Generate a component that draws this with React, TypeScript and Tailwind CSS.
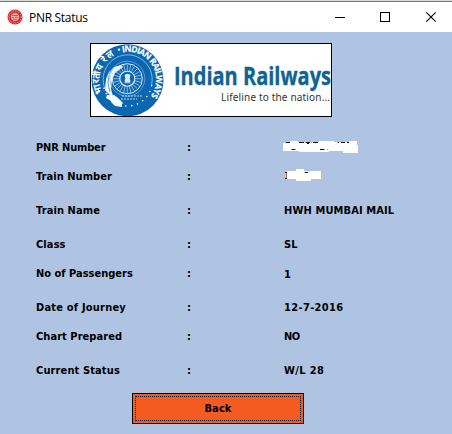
import React from "react";

type Row = { label: string; labelCls: string; value?: string; valueCls?: string; height: string; redacted?: "pnr" | "train" };

const rows: Row[] = [
  { label: "PNR Number", labelCls: "tracking-[-0.15px]", height: "h-[29px]", redacted: "pnr" },
  { label: "Train Number", labelCls: "tracking-[0.05px]", height: "h-[34px]", redacted: "train" },
  { label: "Train Name", labelCls: "tracking-[0.1px]", value: "HWH MUMBAI MAIL", valueCls: "tracking-[0.12px]", height: "h-[34px]" },
  { label: "Class", labelCls: "tracking-[0.1px]", value: "SL", height: "h-[29px]" },
  { label: "No of Passengers", labelCls: "tracking-[0px]", value: "1", valueCls: "pt-px", height: "h-[34px]" },
  { label: "Date of Journey", labelCls: "tracking-[0.2px]", value: "12-7-2016", valueCls: "tracking-[0.35px]", height: "h-[29px]" },
  { label: "Chart Prepared", labelCls: "tracking-[0.05px]", value: "NO", valueCls: "tracking-[-0.5px]", height: "h-[34px]" },
  { label: "Current Status", labelCls: "tracking-[0.12px]", value: "W/L 28", valueCls: "tracking-[0.35px]", height: "h-[23px]" },
];

function AppIcon() {
  return (
    <svg width="16" height="16" viewBox="0 0 16 16" className="mr-[6px] shrink-0">
      <circle cx="8" cy="8" r="7.5" fill="#e0242b" />
      <circle cx="8" cy="8" r="6" fill="none" stroke="#f6b3b3" strokeWidth="1" strokeDasharray="1 1.1" />
      <circle cx="8" cy="8" r="4.5" fill="#f2b4b4" stroke="#d51d26" strokeWidth=".8" />
      <path d="M5 6.5h6M5 8.5h2M8 8.2h3M6 10.3h4" stroke="#d8444a" strokeWidth=".9" />
    </svg>
  );
}

function Emblem() {
  const stars = Array.from({ length: 12 }, (_, i) => {
    const a = ((i * 14 + 10) * Math.PI) / 180;
    return { x: 36.5 + 24.5 * Math.cos(a), y: 36.5 + 24.5 * Math.sin(a) };
  });
  const spokes = Array.from({ length: 24 }, (_, i) => (i * 15 * Math.PI) / 180);
  return (
    <svg width="74" height="72" viewBox="0 0 74 72" className="shrink-0">
      <defs>
        <path id="ringRight" d="M31.5 8.4A28 28 0 0 1 58 54.5" />
        <path id="ringLeft" d="M11 48.5A28 28 0 0 1 26 10.3" />
      </defs>
      <circle cx="36.5" cy="36.2" r="36" fill="#0b67b2" />
      <path d="M17 50A24.5 24.5 0 1 1 60.5 41" fill="none" stroke="#8fbee2" strokeWidth=".9" />
      {stars.map((s, i) => (
        <circle key={i} cx={s.x} cy={s.y + 1} r=".8" fill="#fff" />
      ))}
      <path d="M15 35l3-7 5-5 7-2 2 2-8 6-3 7-1 9 2 7 5 5 4 3v3l-7-1-4-4-1-7-5-5z" fill="#f1f7fc" />
      <path d="M16 51h7l4 3 5 5-2 2-8-3-7-4z" fill="#fff" />
      <path d="M18 31l-1 8 2 9M21 25l-3 5" stroke="#3d8cc8" strokeWidth=".8" fill="none" />
      {spokes.map((a, i) => (
        <path
          key={i}
          d={`M${36.3 + 8 * Math.cos(a)} ${34.7 + 8 * Math.sin(a)}L${36.3 + 14 * Math.cos(a)} ${34.7 + 14 * Math.sin(a)}`}
          stroke="#a9cdea"
          strokeWidth=".8"
        />
      ))}
      <circle cx="36.3" cy="34.7" r="17.5" fill="none" stroke="#7db3dc" strokeWidth=".7" />
      <circle cx="36.3" cy="34.7" r="15" fill="none" stroke="#e7f1f9" strokeWidth="1" />
      <circle cx="36.3" cy="34.7" r="7.5" fill="#0b67b2" stroke="#e7f1f9" strokeWidth="1.1" />
      <path d="M34 31.2q2.5-2 5 0l-.8 3.2.8 3h-5l.8-3zM33.5 38.7h6" fill="#d7e8f5" stroke="#fff" strokeWidth=".8" />
      <path d="M31 52h20M30 55h16" stroke="#bad7ed" strokeWidth="1" strokeDasharray="2 1" fill="none" />
      <circle cx="28" cy="5.6" r="1.2" fill="#fff" />
      <g fill="#fff" fontFamily="'Open Sans', sans-serif" fontWeight="700">
        <text fontSize="8.6" stroke="#fff" strokeWidth=".15">
          <textPath href="#ringRight" textLength="67" startOffset="0">INDIAN RAILWAYS</textPath>
        </text>
        <text fontSize="9.5">
          <textPath href="#ringLeft" textLength="42" startOffset="0">भारतीय रेल</textPath>
        </text>
      </g>
    </svg>
  );
}

function Logo() {
  return (
    <div className="flex h-[74px] w-[242px] border border-black bg-white">
      <Emblem />
      <svg width="166" height="72" viewBox="0 0 166 72" className="shrink-0">
        <text x="9" y="41" fontFamily="'Open Sans', sans-serif" fontWeight="700" fontSize="24.5" fill="#116394" stroke="#116394" strokeWidth=".35" textLength="157" lengthAdjust="spacingAndGlyphs">Indian Railways</text>
        <text x="56" y="57" fontFamily="'Noto Sans', 'Open Sans', sans-serif" fontWeight="400" fontSize="10" fill="#333" textLength="109" lengthAdjust="spacing">Lifeline to the nation...</text>
      </svg>
    </div>
  );
}

function PnrMask() {
  return (
    <svg width="76" height="13" viewBox="0 0 76 13" shapeRendering="crispEdges" className="absolute -left-[1px] top-[5px]">
      <path d="M0 2h7V0h8v1h21V0h15v1h15V0h8v4h1v8H60v-2H46v1H16v-1H0z" fill="#fff" />
      <path d="M3 1.5h4M16 1.5h5M23 1.5h4M30 1.5h5M55 1.5h1M58 1.5h4M64 1.5h2M9 8.5h3M37 8.5h4M24 2.5h2" stroke="#111" />
      <path d="M22 1.5h1M28 1.5h1M54 1.5h1M12 8.5h1M41 8.5h1" stroke="#75b6ee" />
      <path d="M8 8.5h1M44 8.5h1" stroke="#c98838" />
    </svg>
  );
}

function TrainMask() {
  return (
    <svg width="40" height="13" viewBox="0 0 40 13" shapeRendering="crispEdges" className="absolute left-0 top-[4px]">
      <path d="M3 2h9V0h8v2h17v8H27v2H12v-2H3z" fill="#fff" />
      <path d="M1 3.5h2M1 9.5h2M21 3.5h3" stroke="#111" />
      <path d="M2.5 4v5" stroke="#a47b32" />
      <path d="M20 3.5h1" stroke="#75b6ee" />
    </svg>
  );
}

export default function App() {
  return (
    <div className="flex h-[434px] w-[452px] flex-col overflow-hidden bg-[#afc4e2] font-['DejaVu_Sans_Condensed','DejaVu_Sans',sans-serif] text-[11px] leading-[23px] font-bold text-black">
      <div className="h-px shrink-0 bg-[#dcdcd6]" />
      <header className="flex h-[31px] shrink-0 items-center border-t border-[#189ab4] bg-white pl-[7px]">
        <AppIcon />
        <span className="font-['Open_Sans',sans-serif] text-[12px] font-normal tracking-[-0.3px]">PNR Status</span>
        <svg width="138" height="29" viewBox="0 0 138 29" className="ml-auto" shapeRendering="crispEdges">
          <path d="M21 14.5h10" stroke="#000" />
          <path d="M66.5 9.5h9v9h-9z" fill="none" stroke="#000" />
          <path d="M112.3 9.3l9.4 9.4M121.7 9.3l-9.4 9.4" stroke="#000" strokeWidth="1.1" shapeRendering="auto" />
        </svg>
      </header>
      <main className="flex flex-col pt-[11px]">
        <div className="ml-[90px]">
          <Logo />
        </div>
        <div className="mt-[19px] pl-[36px]">
          {rows.map((r) => (
            <div key={r.label} className={`flex items-start whitespace-nowrap ${r.height}`}>
              <span className={`w-[151px] ${r.labelCls}`}>{r.label}</span>
              <span className="w-[97px]">:</span>
              <span className={`relative ${r.valueCls ?? ""}`}>
                {r.value}
                {r.redacted === "pnr" && <PnrMask />}
                {r.redacted === "train" && <TrainMask />}
              </span>
            </div>
          ))}
        </div>
        <button className="mt-[11px] ml-[132px] h-[31px] w-[172px] border border-black bg-[#f45b20] p-[2px]">
          <span className="flex h-full items-center justify-center border border-dotted border-black pb-px tracking-[0.1px]">Back</span>
        </button>
      </main>
    </div>
  );
}
